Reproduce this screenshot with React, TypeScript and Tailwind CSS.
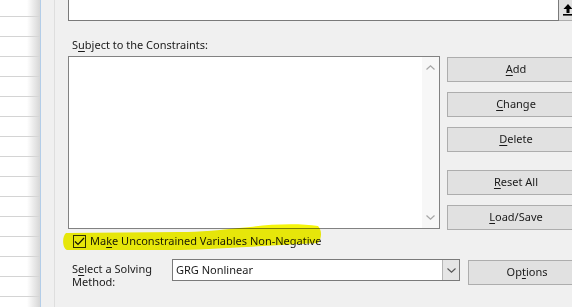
import { Fragment } from "react";

const font = "font-['Segoe_UI','Noto_Sans',sans-serif]";

// label with an underlined access key
function Key({ text, at }: { text: string; at: number }) {
    return (
        <Fragment>
            {text.slice(0, at)}
            <span className="underline underline-offset-[1.5px]">{text[at]}</span>
            {text.slice(at + 1)}
        </Fragment>
    );
}

function Btn({ text, at, className = "" }: { text: string; at: number; className?: string }) {
    return (
        <div
            className={`h-[25px] flex items-center justify-center bg-[#e1e1e1] border border-[#adadad] text-[#1a1a1a] ${className}`}
        >
            <Key text={text} at={at} />
        </div>
    );
}

export default function App() {
    const rows = Array.from({ length: 15 });

    return (
        <div className={`relative w-[572px] h-[307px] overflow-hidden flex bg-[#f0f0f0] text-[11px] text-[#1a1a1a] ${font}`}>
            {/* worksheet behind the dialog */}
            <div className="relative w-[40px] shrink-0 bg-white">
                <div className="h-[17px] border-b border-[#d4d4d4]" />
                {rows.map((_, i) => (
                    <div key={i} className="h-[20px] border-b border-[#d4d4d4]" />
                ))}
                <div className="absolute inset-y-0 right-0 w-[13px] bg-gradient-to-r from-transparent to-[#d6d6d6]" />
            </div>
            <div className="w-[1px] shrink-0 bg-[#b3cde8]" />
            <div className="w-[14px] shrink-0 border-r border-[#dedede]" />

            {/* dialog body */}
            <div className="flex-1 min-w-0 pl-[13px] flex flex-col">
                {/* By Changing Variable Cells input */}
                <div className="flex h-[21px] shrink-0">
                    <div className="w-[491px] shrink-0 bg-white border border-t-0 border-[#7a7a7a]" />
                    <div className="flex-1 bg-[#e1e1e1] border-b border-[#adadad] flex items-start pl-[4px] pt-[4px]">
                        <svg width="10" height="12" viewBox="0 0 10 12">
                            <path d="M5 0 L9.5 5 L6.5 5 L6.5 9 L3.5 9 L3.5 5 L0.5 5 Z" fill="#000" />
                            <rect x="0" y="10" width="10" height="1.6" fill="#000" />
                        </svg>
                    </div>
                </div>

                <div className="mt-[16px] h-[15px] leading-[15px] pl-[4px]">
                    <Key text="Subject to the Constraints:" at={1} />
                </div>

                <div className="mt-[4px] flex">
                    {/* constraints list */}
                    <div className="w-[372px] h-[173px] bg-white border border-[#828282] flex justify-end shrink-0">
                        <div className="w-[17px] bg-[#f7f7f7] flex flex-col items-center justify-between py-[8px]">
                            <svg width="9" height="5" viewBox="0 0 9 5">
                                <path d="M0.5 4.5 L4.5 0.8 L8.5 4.5" fill="none" stroke="#a6a6a6" strokeWidth="1.2" />
                            </svg>
                            <svg width="9" height="5" viewBox="0 0 9 5">
                                <path d="M0.5 0.5 L4.5 4.2 L8.5 0.5" fill="none" stroke="#a6a6a6" strokeWidth="1.2" />
                            </svg>
                        </div>
                    </div>

                    <div className="ml-[7px] w-[138px] shrink-0 flex flex-col">
                        <Btn text="Add" at={0} className="mt-[1px]" />
                        <Btn text="Change" at={0} className="mt-[10px]" />
                        <Btn text="Delete" at={0} className="mt-[10px]" />
                        <Btn text="Reset All" at={0} className="mt-[18px]" />
                        <Btn text="Load/Save" at={0} className="mt-[10px]" />
                    </div>
                </div>

                {/* non-negative checkbox */}
                <div className="mt-[4px] h-[15px] flex items-center">
                    <div className="ml-[5px] w-[13px] h-[13px] border border-[#333] flex items-center justify-center">
                        <svg width="11" height="9" viewBox="0 0 11 9">
                            <path d="M1 4.5 L4 7.5 L10 1" fill="none" stroke="#111" strokeWidth="1.2" />
                        </svg>
                    </div>
                    <span className="ml-[4px]">
                        <Key text="Make Unconstrained Variables Non-Negative" at={2} />
                    </span>
                </div>

                {/* solving method */}
                <div className="mt-[10px] flex items-start">
                    <div className="w-[104px] shrink-0 pl-[4px] pt-[3px] leading-[13px]">
                        <Key text="Select a Solving" at={1} />
                        <br />
                        Method:
                    </div>
                    <div className="w-[288px] shrink-0 h-[22px] bg-white border border-[#7a7a7a] flex items-center justify-between">
                        <span className="pl-[3px]">GRG Nonlinear</span>
                        <div className="w-[17px] h-full bg-[#e5e5e5] border-l border-[#b5b5b5] flex items-center justify-center">
                            <svg width="9" height="5" viewBox="0 0 9 5">
                                <path d="M0.5 0.5 L4.5 4.2 L8.5 0.5" fill="none" stroke="#555" strokeWidth="1.1" />
                            </svg>
                        </div>
                    </div>
                    <Btn text="Options" at={2} className="ml-[8px] mt-[1px] w-[118px] shrink-0" />
                </div>
            </div>

            {/* yellow marker highlight over the checkbox line */}
            <svg
                className="absolute left-0 top-0 pointer-events-none mix-blend-multiply"
                width="572"
                height="307"
                viewBox="0 0 572 307"
            >
                <path
                    d="M66 233 C62 236 62 248 67 250 L180 250 C220 249 260 246 300 244 L318 243 C322 238 322 230 318 226 C300 223 270 224 250 227 C220 230 200 232 180 232 Z"
                    fill="#f5f50a"
                />
            </svg>
        </div>
    );
}
